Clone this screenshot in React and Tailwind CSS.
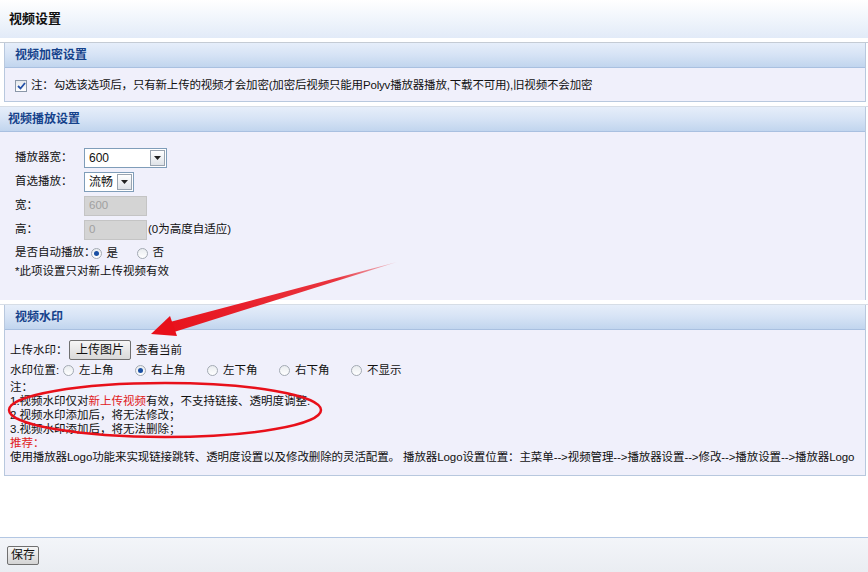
import React from "react";

const FONT = { fontFamily: '"Liberation Sans", "Noto Sans CJK SC", sans-serif' };

function PanelHeader({ title, indent = "pl-[10px]" }) {
  return (
    <div className={`h-[25px] flex items-center ${indent} bg-gradient-to-b from-[#e6eefa] via-[#d6e3f5] to-[#c1d5ee] border-b border-[#a9c0e0]`}>
      <span className="text-[12px] font-bold text-[#15428b]">{title}</span>
    </div>
  );
}

function Select({ value, width }) {
  return (
    <div className={`h-[20px] ${width} bg-white border border-[#7f9db9] flex items-center justify-between pl-[4px] pr-[1px]`}>
      <span className="text-[12px] text-[#111]">{value}</span>
      <span className="w-[15px] h-[16px] border border-[#9aa4b0] bg-gradient-to-b from-white to-[#dfe3e8] flex items-center justify-center">
        <svg width="7" height="4" viewBox="0 0 7 4">
          <path d="M0 0 L7 0 L3.5 4 Z" fill="#222" />
        </svg>
      </span>
    </div>
  );
}

function Radio({ checked, label, width }) {
  return (
    <span className={`inline-flex items-center gap-[5px] shrink-0 ${width}`}>
      <span className="w-[11px] h-[11px] rounded-full border border-[#a3aab3] bg-gradient-to-b from-[#e9ecef] to-white flex items-center justify-center">
        {checked && <span className="w-[5px] h-[5px] rounded-full bg-[#1a4fa3]" />}
      </span>
      <span>{label}</span>
    </span>
  );
}

function Row({ label, children }) {
  return (
    <div className="flex items-center h-[24px]">
      <span className="w-[69px] shrink-0 whitespace-nowrap">{label}</span>
      {children}
    </div>
  );
}

export default function App() {
  return (
    <div style={FONT} className="relative w-[868px] h-[572px] bg-white overflow-hidden flex flex-col text-[11.5px] text-[#111]">
      <div className="h-[38px] shrink-0 flex items-center pl-[9px] bg-gradient-to-b from-white to-[#e2ebf8]">
        <span className="text-[13px] font-bold text-[#111]">视频设置</span>
      </div>
      <div className="h-[5px] shrink-0 border-b border-[#c4cbd4]" />

      <div className="mx-[4px] mr-[2px] border border-[#b8c8de] border-t-0">
        <PanelHeader title="视频加密设置" />
        <div className="h-[33px] bg-[#f0f0fb] flex items-center pl-[10px] pt-[3px] gap-[4px]">
          <span className="w-[12px] h-[12px] border border-[#8a97a8] bg-gradient-to-b from-[#e5e8ec] to-white flex items-center justify-center">
            <svg width="9" height="8" viewBox="0 0 9 8">
              <path d="M1 4 L3.5 6.5 L8 1" fill="none" stroke="#2350a8" strokeWidth="1.8" />
            </svg>
          </span>
          <span className="whitespace-nowrap tracking-[-0.18px]">注：勾选该选项后，只有新上传的视频才会加密(加密后视频只能用Polyv播放器播放,下载不可用),旧视频不会加密</span>
        </div>
      </div>

      <div className="h-[5px] shrink-0 border-b border-[#d6dde6]" />
      <div className="mr-[2px] border-r border-[#b8c8de]">
        <PanelHeader title="视频播放设置" indent="pl-[8px]" />
        <div className="h-[168px] bg-[#f0f0fb] pl-[15px] pt-[14px]">
          <Row label="播放器宽：">
            <Select value="600" width="w-[83px]" />
          </Row>
          <Row label="首选播放：">
            <Select value="流畅" width="w-[50px]" />
          </Row>
          <Row label="宽：">
            <div className="h-[20px] w-[63px] bg-[#d4d4d4] border border-[#c4c4c4] pl-[4px] text-[#a0a0a0] flex items-center">600</div>
          </Row>
          <Row label="高：">
            <div className="h-[20px] w-[63px] bg-[#d4d4d4] border border-[#c4c4c4] pl-[4px] text-[#a0a0a0] flex items-center">0</div>
            <span className="ml-[1px]">(0为高度自适应)</span>
          </Row>
          <div className="flex items-center h-[22px]">
            <span className="whitespace-nowrap">是否自动播放：</span>
            <span className="-ml-[5px]">
              <Radio checked label="是" width="w-[46px]" />
            </span>
            <Radio label="否" />
          </div>
          <div className="h-[16px] flex items-center">*此项设置只对新上传视频有效</div>
        </div>
      </div>

      <div className="h-[5px] shrink-0 border-b border-[#d6dde6]" />
      <div className="mx-[4px] mr-[2px] border border-[#b8c8de] border-t-0">
        <PanelHeader title="视频水印" />
        <div className="h-[145px] bg-[#f0f0fb] pl-[5px] pt-[9px] leading-[14px]">
          <div className="flex items-center h-[21px]">
            <span className="w-[59px] shrink-0 whitespace-nowrap">上传水印：</span>
            <span className="h-[20px] px-[6px] border border-[#707070] rounded-[2px] bg-gradient-to-b from-[#f6f6f6] to-[#d9d9d9] flex items-center text-[12px]">上传图片</span>
            <span className="ml-[5px]">查看当前</span>
          </div>
          <div className="flex items-center h-[20px]">
            <span className="w-[53px] shrink-0 whitespace-nowrap">水印位置:</span>
            <Radio label="左上角" width="w-[72px]" />
            <Radio checked label="右上角" width="w-[72px]" />
            <Radio label="左下角" width="w-[72px]" />
            <Radio label="右下角" width="w-[72px]" />
            <Radio label="不显示" />
          </div>
          <div>注：</div>
          <div>
            1.视频水印仅对<span className="text-[#e0201c]">新上传视频</span>有效，不支持链接、透明度调整.
          </div>
          <div>2.视频水印添加后，将无法修改；</div>
          <div>3.视频水印添加后，将无法删除；</div>
          <div className="text-[#e0201c]">推荐：</div>
          <div className="whitespace-nowrap tracking-[-0.1px]">使用播放器Logo功能来实现链接跳转、透明度设置以及修改删除的灵活配置。 播放器Logo设置位置：主菜单--&gt;视频管理--&gt;播放器设置--&gt;修改--&gt;播放设置--&gt;播放器Logo</div>
        </div>
      </div>

      <div className="flex-1" />
      <div className="h-[35px] shrink-0 border-t border-[#b3c7e3] bg-gradient-to-b from-[#f3f5f9] to-[#eaedf2] flex items-center pl-[7px]">
        <span className="h-[19px] px-[3px] border border-[#707070] rounded-[2px] bg-gradient-to-b from-[#f6f6f6] to-[#d4d4d4] flex items-center text-[12px]">保存</span>
      </div>

      <svg className="absolute left-0 top-0 pointer-events-none" width="868" height="572" viewBox="0 0 868 572">
        <defs>
          <linearGradient id="arr" x1="397" y1="262" x2="160" y2="330" gradientUnits="userSpaceOnUse">
            <stop offset="0" stopColor="#e8202a" stopOpacity="0.2" />
            <stop offset="0.25" stopColor="#e8202a" stopOpacity="0.9" />
            <stop offset="1" stopColor="#e8101a" />
          </linearGradient>
        </defs>
        <path d="M397 262 L170 322 L174 332 Z" fill="url(#arr)" />
        <path d="M151 334 L170 316 L177 336 Z" fill="#e8101a" />
        <ellipse cx="165" cy="410" rx="156" ry="27" fill="none" stroke="#e8101a" strokeWidth="2.5" />
      </svg>
    </div>
  );
}
